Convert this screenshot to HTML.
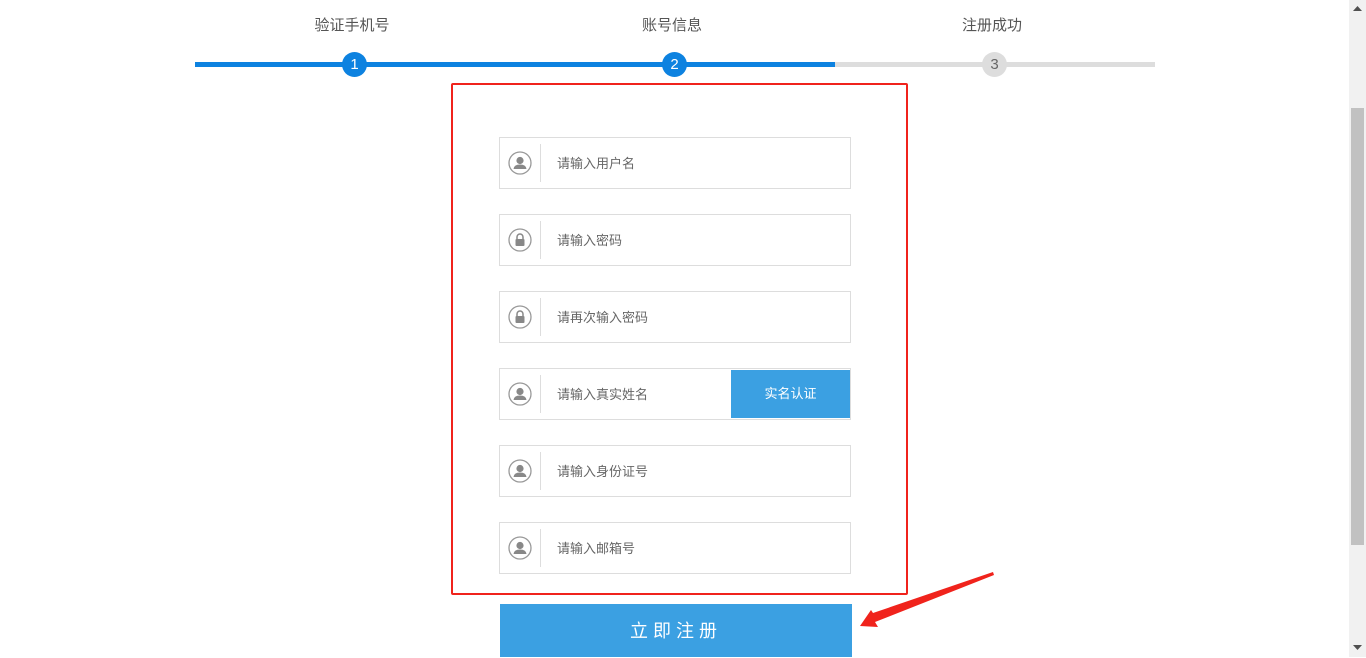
<!DOCTYPE html>
<html><head><meta charset="utf-8"><style>
*{margin:0;padding:0;box-sizing:border-box}
body{width:1366px;height:657px;overflow:hidden;background:#fff;position:relative;font-family:"Liberation Sans","Noto Sans CJK SC",sans-serif;}
.lbl{position:absolute;top:14px;font-size:15px;color:#555;width:120px;text-align:center}
.line{position:absolute;top:62px;height:5px}
.dot{position:absolute;top:52px;width:25px;height:25px;border-radius:50%;color:#fff;font-size:15px;text-align:center;line-height:25px}
.box{position:absolute;left:451px;top:83px;width:457px;height:512px;border:2px solid #f0231c;border-radius:2px}
.row{position:absolute;left:499px;width:352px;height:52px;border:1px solid #ddd;background:#fff}
.row .ic{position:absolute;left:0;top:6px;width:41px;height:38px;border-right:1px solid #ddd}
.row .ic svg{position:absolute;left:8px;top:7px}
.row span{position:absolute;left:57px;top:15px;font-size:13px;color:#666}
.btn2{position:absolute;right:0;top:1px;width:119px;height:48px;background:#3ba0e2;color:#fff;font-size:13px;text-align:center;line-height:47px}
.reg{position:absolute;left:500px;top:604px;width:352px;height:53px;background:#3ba0e2;color:#fff;font-size:18px;letter-spacing:5px;text-align:center;line-height:54px}
.sb{position:absolute;left:1349px;top:0;width:17px;height:657px;background:#f1f1f1}
.th{position:absolute;left:1351px;top:108px;width:13px;height:437px;background:#c1c1c1}
</style></head><body>
<div class="lbl" style="left:292px">验证手机号</div>
<div class="lbl" style="left:612px">账号信息</div>
<div class="lbl" style="left:932px">注册成功</div>
<div class="line" style="left:195px;width:640px;background:#0d82e0"></div>
<div class="line" style="left:835px;width:320px;background:#ddd"></div>
<div class="dot" style="left:342px;background:#0d82e0">1</div>
<div class="dot" style="left:662px;background:#0d82e0">2</div>
<div class="dot" style="left:982px;background:#ddd;color:#666">3</div>
<div class="box"></div>

<svg width="0" height="0" style="position:absolute"><defs>
<g id="user"><circle cx="12" cy="12" r="11" fill="none" stroke="#999" stroke-width="1.3"/><circle cx="12" cy="9.5" r="3.6" fill="#888"/><path d="M5.5 18 Q6 13.5 12 13.5 Q18 13.5 18.5 18 Z" fill="#888"/></g>
<g id="lock"><circle cx="12" cy="12" r="11" fill="none" stroke="#999" stroke-width="1.3"/><path d="M9 11 V9 A3 3 0 0 1 15 9 V11" fill="none" stroke="#888" stroke-width="1.5"/><rect x="7.5" y="11" width="9" height="7" rx="1" fill="#888"/></g>
</defs></svg>

<div class="row" style="top:137px"><div class="ic"><svg width="24" height="24"><use href="#user"/></svg></div><span>请输入用户名</span></div>
<div class="row" style="top:214px"><div class="ic"><svg width="24" height="24"><use href="#lock"/></svg></div><span>请输入密码</span></div>
<div class="row" style="top:291px"><div class="ic"><svg width="24" height="24"><use href="#lock"/></svg></div><span>请再次输入密码</span></div>
<div class="row" style="top:368px"><div class="ic"><svg width="24" height="24"><use href="#user"/></svg></div><span>请输入真实姓名</span><div class="btn2">实名认证</div></div>
<div class="row" style="top:445px"><div class="ic"><svg width="24" height="24"><use href="#user"/></svg></div><span>请输入身份证号</span></div>
<div class="row" style="top:522px"><div class="ic"><svg width="24" height="24"><use href="#user"/></svg></div><span>请输入邮箱号</span></div>

<div class="reg">立即注册</div>

<svg style="position:absolute;left:0;top:0" width="1366" height="657">
<path d="M993 572 L873 613 L871 610 L860 626 L878 627 L875 622 L994 575 Z" fill="#f0231c"/>
</svg>

<div class="sb"></div><div class="th"></div>
<svg style="position:absolute;left:1353px;top:6px" width="9" height="6"><path d="M0 5 L4.5 0 L9 5Z" fill="#505050"/></svg>
<svg style="position:absolute;left:1353px;top:645px" width="9" height="6"><path d="M0 0 L4.5 5 L9 0Z" fill="#505050"/></svg>
</body></html>
